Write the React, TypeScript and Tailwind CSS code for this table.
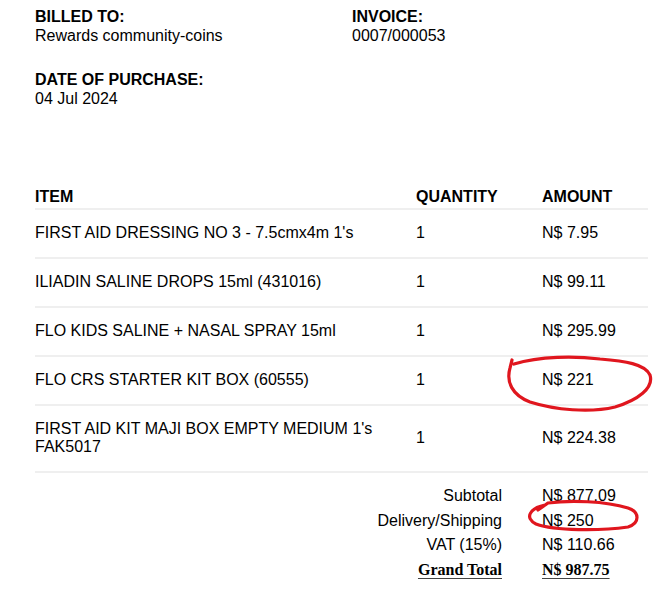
const items = [
  { name: "FIRST AID DRESSING NO 3 - 7.5cmx4m 1's", qty: 1, amount: 'N$ 7.95' },
  { name: 'ILIADIN SALINE DROPS 15ml (431016)', qty: 1, amount: 'N$ 99.11' },
  { name: 'FLO KIDS SALINE + NASAL SPRAY 15ml', qty: 1, amount: 'N$ 295.99' },
  { name: 'FLO CRS STARTER KIT BOX (60555)', qty: 1, amount: 'N$ 221' },
  { name: "FIRST AID KIT MAJI BOX EMPTY MEDIUM 1's FAK5017", qty: 1, amount: 'N$ 224.38' },
];

const totals = [
  { label: 'Subtotal', value: 'N$ 877.09' },
  { label: 'Delivery/Shipping', value: 'N$ 250' },
  { label: 'VAT (15%)', value: 'N$ 110.66' },
];

// hand-drawn red marks over the amounts
function Scribbles() {
  return (
    <svg className="pointer-events-none absolute left-0 top-0" width="655" height="598" viewBox="0 0 655 598">
      <path
        d="M514 364 C 540 356, 575 356, 600 359 C 625 361, 645 364, 650 375 C 654 388, 638 400, 615 407 C 590 413, 555 410, 530 402 C 512 395, 506 382, 510 368 L 512 360"
        fill="none"
        stroke="#e0161e"
        strokeWidth="3.2"
        strokeLinecap="round"
      />
      <path
        d="M545 505 C 530 508, 524 518, 536 524 C 555 531, 600 531, 628 527 C 640 523, 640 512, 628 508 C 605 501, 570 500, 548 503 L 538 510"
        fill="none"
        stroke="#e0161e"
        strokeWidth="3.2"
        strokeLinecap="round"
      />
    </svg>
  );
}

export default function App() {
  return (
    <div className="relative h-[598px] w-[655px] overflow-hidden bg-white pl-[35px] pr-[7px] pt-[7px] font-['Liberation_Sans',Arial,sans-serif] text-[16px] text-black">
      <div className="grid grid-cols-[317px_1fr] leading-[19px]">
        <div>
          <div className="font-bold">BILLED TO:</div>
          <div>Rewards community-coins</div>
        </div>
        <div>
          <div className="font-bold">INVOICE:</div>
          <div>0007/000053</div>
        </div>
      </div>
      <div className="mt-[25px] leading-[19px]">
        <div className="font-bold">DATE OF PURCHASE:</div>
        <div>04 Jul 2024</div>
      </div>

      <div className="mt-[80px] leading-[18px]">
        <div className="grid grid-cols-[381px_126px_1fr] border-b-2 border-[#efefef] pb-[2px] font-bold">
          <div>ITEM</div>
          <div>QUANTITY</div>
          <div>AMOUNT</div>
        </div>
        {items.map((it) => (
          <div
            key={it.name}
            className="grid grid-cols-[381px_126px_1fr] items-center border-b-2 border-[#efefef] pb-[15px] pt-[14px]"
          >
            <div className="pr-[20px]">{it.name}</div>
            <div>{it.qty}</div>
            <div>{it.amount}</div>
          </div>
        ))}
      </div>

      <div className="pt-[11px] leading-[24.5px]">
        {totals.map((t) => (
          <div key={t.label} className="flex">
            <div className="w-[467px] text-right">{t.label}</div>
            <div className="ml-[40px]">{t.value}</div>
          </div>
        ))}
        <div className="flex font-['Liberation_Serif','Times_New_Roman',serif] font-bold">
          <div className="w-[467px] text-right">
            <span className="underline decoration-[#444] decoration-1 underline-offset-[3px]">Grand Total</span>
          </div>
          <div className="ml-[40px]">
            <span className="underline decoration-[#444] decoration-1 underline-offset-[3px]">N$ 987.75</span>
          </div>
        </div>
      </div>

      <Scribbles />
    </div>
  );
}
